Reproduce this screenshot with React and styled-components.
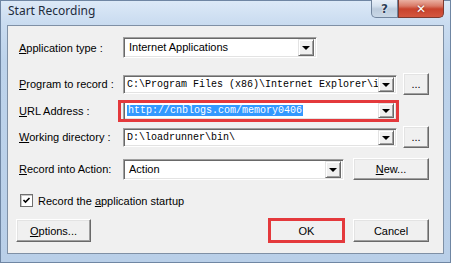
import React from "react";
import styled, { createGlobalStyle } from "styled-components";

const GlobalStyle = createGlobalStyle`
  html, body {
    margin: 0;
    padding: 0;
  }
  body {
    width: 451px;
    height: 263px;
    overflow: hidden;
    font-family: "Liberation Sans", Arial, sans-serif;
  }
`;

const Window = styled.div`
  width: 451px;
  height: 263px;
  box-sizing: border-box;
  border: 1px solid #6f86a3;
  background: linear-gradient(#dce9f7 0px, #cadcf0 22px, #bdd3eb 60px, #b9cfe8);
  padding: 0 6px 8px 6px;
  display: flex;
  flex-direction: column;
`;

const TitleBar = styled.div`
  height: 24px;
  display: flex;
  justify-content: space-between;
  align-items: flex-start;
`;

const Title = styled.div`
  font-family: "Noto Sans", "Open Sans", sans-serif;
  font-size: 12px;
  color: #1e2b3b;
  padding: 1px 0 0 1px;
  line-height: 18px;
`;

const Caption = styled.div`
  display: flex;
  margin-top: -1px;
`;

const CaptionBtn = styled.div`
  width: ${(p) => p.$w}px;
  height: 18px;
  box-sizing: border-box;
  border: 1px solid ${(p) => (p.$close ? "#7d3a30" : "#71849c")};
  border-top: none;
  border-radius: ${(p) => (p.$close ? "0 0 5px 0" : "0 0 0 5px")};
  background: ${(p) =>
    p.$close
      ? "linear-gradient(#eab0a2 0px, #d97a67 6px, #c8432d 9px, #d4573f 17px)"
      : "linear-gradient(#e9f0f8 0px, #d5e1ee 6px, #bccbdc 9px, #c9d7e6 17px)"};
  display: flex;
  align-items: center;
  justify-content: center;
  color: ${(p) => (p.$close ? "#fff" : "#2d3f57")};
  font-family: "DejaVu Sans", sans-serif;
  font-weight: bold;
  font-size: 12px;
  text-shadow: ${(p) =>
    p.$close ? "0 0 2px #7a2012" : "0 0 2px #fff, 0 0 1px #fff"};
`;

const Client = styled.div`
  flex: 1;
  background: #f0f0f0;
  border: 1px solid #7f90a5;
  padding: 0 14px 0 8px;
  display: flex;
  flex-direction: column;
  font-size: 11px;
  color: #000;
`;

const Row = styled.div`
  display: flex;
  align-items: center;
  height: ${(p) => p.$h}px;
  margin-top: ${(p) => p.$top}px;
`;

const Label = styled.div`
  width: 104px;
  margin-left: 3px;
  white-space: nowrap;
`;

const Combo = styled.div`
  width: ${(p) => p.$w}px;
  height: ${(p) => p.$h}px;
  box-sizing: border-box;
  background: #fff;
  border: 1px solid;
  border-color: #a0a0a0 #fff #fff #a0a0a0;
  box-shadow: inset 1px 1px #696969, inset -1px -1px #e3e3e3;
  display: flex;
  align-items: center;
  padding: 0 2px 0 ${(p) => (p.$mono ? 2 : 4)}px;
  font-family: ${(p) =>
    p.$mono ? '"Liberation Mono", "Courier New", monospace' : "inherit"};
  font-size: ${(p) => (p.$mono ? 10 : 11)}px;
  white-space: nowrap;
`;

const ComboText = styled.span`
  flex: 1;
  overflow: hidden;
  line-height: 13px;
  padding-left: 1px;
`;

const Selected = styled.span`
  background: #3399ff;
  color: #fff;
  padding: 0 1px;
`;

const Arrow = styled.div`
  width: 16px;
  height: ${(p) => p.$h}px;
  box-sizing: border-box;
  background: #f0f0f0;
  border: 1px solid;
  border-color: #e3e3e3 #696969 #696969 #e3e3e3;
  box-shadow: inset 1px 1px #fff, inset -1px -1px #a0a0a0;
  display: flex;
  align-items: center;
  justify-content: center;
  &::after {
    content: "";
    border-left: 4px solid transparent;
    border-right: 4px solid transparent;
    border-top: 4px solid #000;
    margin-top: 1px;
  }
`;

const Button = styled.div`
  width: ${(p) => p.$w}px;
  height: ${(p) => p.$h}px;
  box-sizing: border-box;
  margin-left: ${(p) => p.$ml || 0}px;
  background: #f0f0f0;
  border: 1px solid;
  border-color: #fff #696969 #696969 #fff;
  box-shadow: inset -1px -1px #a0a0a0, inset 1px 1px #e3e3e3;
  display: flex;
  align-items: center;
  justify-content: center;
  font-size: 11px;
  line-height: 12px;
`;

const Marked = styled.div`
  position: relative;
  &::after {
    content: "";
    position: absolute;
    top: ${(p) => p.$t}px;
    bottom: ${(p) => p.$b}px;
    left: ${(p) => p.$l}px;
    right: ${(p) => p.$r}px;
    border: 3px solid #e4393c;
    pointer-events: none;
  }
`;

const CheckRow = styled.div`
  display: flex;
  align-items: center;
  height: 13px;
  margin-top: 14px;
  margin-left: 4px;
`;

const Box = styled.div`
  width: 13px;
  height: 13px;
  box-sizing: border-box;
  background: #fff;
  border: 1px solid #707070;
  box-shadow: inset 1px 1px #c8c8c8;
  display: flex;
  align-items: center;
  justify-content: center;
  margin-right: 5px;
`;

const Footer = styled.div`
  display: flex;
  align-items: center;
  height: 23px;
  margin-top: 12px;
`;

const Spacer = styled.div`
  flex: 1;
`;

export default function App() {
  return (
    <>
      <GlobalStyle />
      <Window>
        <TitleBar>
          <Title>Start Recording</Title>
          <Caption>
            <CaptionBtn $w={27}>?</CaptionBtn>
            <CaptionBtn $w={46} $close>
              ✕
            </CaptionBtn>
          </Caption>
        </TitleBar>
        <Client>
          <Row $h={21} $top={11}>
            <Label>
              <u>A</u>pplication type :
            </Label>
            <Combo $w={194} $h={21}>
              <ComboText>Internet Applications</ComboText>
              <Arrow $h={17} />
            </Combo>
          </Row>

          <Row $h={22} $top={15}>
            <Label>
              <u>P</u>rogram to record :
            </Label>
            <Combo $w={274} $h={19} $mono>
              <ComboText>C:\Program Files (x86)\Internet Explorer\i</ComboText>
              <Arrow $h={15} />
            </Combo>
            <Button $w={26} $h={22} $ml={6}>
              ...
            </Button>
          </Row>

          <Row $h={19} $top={6}>
            <Label>
              <u>U</u>RL Address :
            </Label>
            <Marked $t={-1} $b={-2} $l={-5} $r={-2}>
              <Combo $w={274} $h={19} $mono>
                <ComboText>
                  <Selected>http://cnblogs.com/memory0406</Selected>
                </ComboText>
                <Arrow $h={15} />
              </Combo>
            </Marked>
          </Row>

          <Row $h={22} $top={6}>
            <Label>
              <u>W</u>orking directory :
            </Label>
            <Combo $w={274} $h={19} $mono>
              <ComboText>D:\loadrunner\bin\</ComboText>
              <Arrow $h={15} />
            </Combo>
            <Button $w={26} $h={22} $ml={6}>
              ...
            </Button>
          </Row>

          <Row $h={22} $top={10}>
            <Label>
              <u>R</u>ecord into Action:
            </Label>
            <Combo $w={221} $h={21}>
              <ComboText>Action</ComboText>
              <Arrow $h={17} />
            </Combo>
            <Button $w={76} $h={22} $ml={9}>
              <span>
                <u>N</u>ew...
              </span>
            </Button>
          </Row>

          <CheckRow>
            <Box>
              <svg width="9" height="9" viewBox="0 0 9 9">
                <polyline
                  points="1.5,4 3.5,6 7.5,2"
                  fill="none"
                  stroke="#000"
                  strokeWidth="1.6"
                />
              </svg>
            </Box>
            <span>
              Record the <u>a</u>pplication startup
            </span>
          </CheckRow>

          <Footer>
            <Button $w={75} $h={23}>
              <span>
                <u>O</u>ptions...
              </span>
            </Button>
            <Spacer />
            <Marked $t={-1} $b={-1} $l={-1} $r={-1}>
              <Button $w={75} $h={23}>
                OK
              </Button>
            </Marked>
            <Button $w={76} $h={23} $ml={9}>
              Cancel
            </Button>
          </Footer>
        </Client>
      </Window>
    </>
  );
}
